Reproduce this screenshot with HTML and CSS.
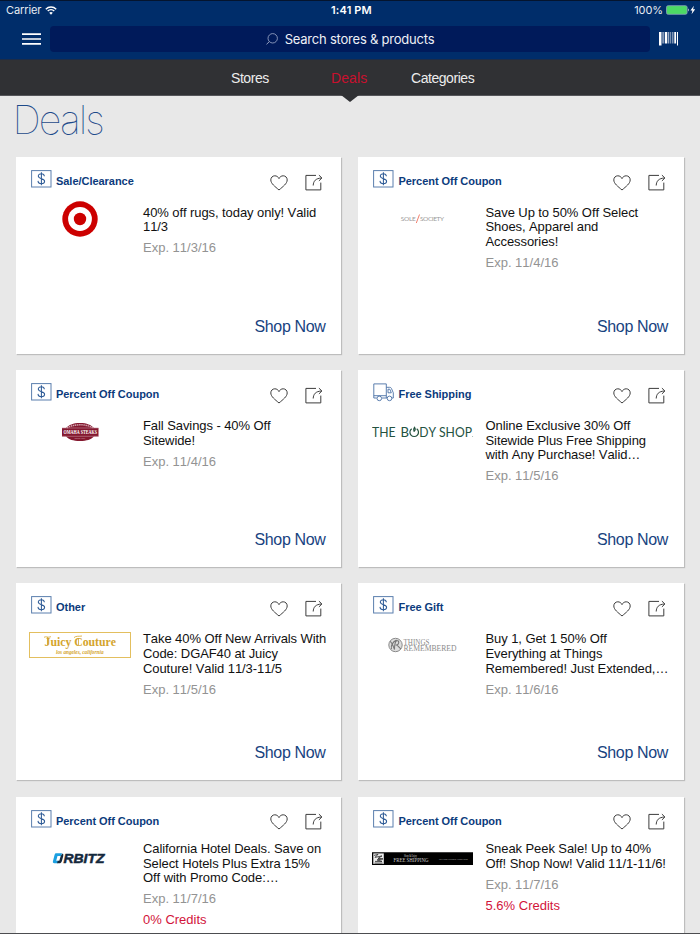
FILE: index.html
```html
<!DOCTYPE html>
<html lang="en">
<head>
<meta charset="utf-8">
<title>Deals</title>
<link rel="stylesheet" href="styles.css">
</head>
<body>
<svg class="defs" aria-hidden="true">
  <symbol id="money" viewBox="0 0 21 18">
    <rect x=".6" y=".6" width="19.4" height="16.4" fill="none" stroke="#5b7fae" stroke-width="1"/>
    <path d="M13.400 6.200C13.200 4.500 12.100 3.700 10.400 3.700 8.600 3.700 7.300 4.600 7.300 6.100c0 3.400 6.300 1.700 6.300 5.100 0 1.600-1.400 2.500-3.200 2.500-2 0-3.300-1-3.400-2.800M10.400 2.200v13" fill="none" stroke="#2f5c97" stroke-width="1.050"/>
  </symbol>
  <symbol id="truck" viewBox="0 0 21 19">
    <g fill="none" stroke="#4a71a6" stroke-width=".9">
      <path d="M3.700 15H.8V.9h12.500V15H9M13.300 4.300h3.200c1.200 0 1.700.5 2.100 1.500l1.700 4V15h-1.500M13.300 15h.8M15 6.200h1.800l1.500 3.600H15zM.8 12.700h12.500"/>
      <circle cx="6.300" cy="15.400" r="2.300"/><circle cx="16.500" cy="15.400" r="2.300"/>
    </g>
  </symbol>
  <symbol id="heart" viewBox="0 0 18 16">
    <path d="M9 15C5 11.500.8 8.600.8 4.900.8 2.600 2.500.8 4.800.8 6.700.8 8.200 1.900 9 3.600 9.800 1.900 11.300.8 13.200.8c2.300 0 4 1.800 4 4.100C17.200 8.600 13 11.500 9 15z" fill="none" stroke="#3c3c3c" stroke-width="1"/>
  </symbol>
  <symbol id="share" viewBox="0 0 18 17">
    <path d="M11 1.400H.9v14.500h14.900V8.600M8.200 11.500c.2-4.400 2.400-7.200 8.400-7.500M13.900 1.100l3 2.900-3 2.900" fill="none" stroke="#3c3c3c" stroke-width="1"/>
  </symbol>
</svg>

<header class="top">
  <div class="status">
    <div class="carrier">Carrier
      <svg width="12" height="9" viewBox="0 0 12 9"><g fill="none" stroke="#fff" stroke-width="1.400"><path d="M.8 3.200a7.400 7.400 0 0 1 10.400 0M2.700 5.100a4.700 4.700 0 0 1 6.600 0"/></g><path d="M6 8.700 4.200 6.800a2.600 2.600 0 0 1 3.600 0z" fill="#fff"/></svg>
    </div>
    <div class="clock">1:41 PM</div>
    <div class="power">100%
      <svg width="29" height="10" viewBox="0 0 29 10"><rect x=".5" y=".7" width="20.600" height="8.600" rx="1.600" fill="#4cd964" stroke="#8ba3bd" stroke-width=".8"/><path d="M22 3.600c1 .3 1 2.500 0 2.800z" fill="#dfe6ef"/><path d="M27.900.8 24.400 5.500h2l-.8 3.700 3.500-4.900h-2z" fill="#fff"/></svg>
    </div>
  </div>
  <div class="searchbar">
    <svg class="menu" width="20" height="12" viewBox="0 0 20 12"><path d="M0 1.200h19M0 6h19M0 10.800h19" stroke="#fff" stroke-width="1.700"/></svg>
    <div class="search">
      <svg width="12" height="12" viewBox="0 0 12 12"><circle cx="6.700" cy="5.300" r="4.700" fill="none" stroke="#a3aecb" stroke-width=".8"/><path d="M3.300 8.700.5 11.300" stroke="#a3aecb" stroke-width=".9"/></svg>
      <span>Search stores &amp; products</span>
    </div>
    <svg class="barcode" width="20" height="14" viewBox="0 0 20 14"><g fill="#fff"><path d="M0 0h2.500v13.600H0zM3.600 0h.9v11.400h-.9zM5.800 0h2.500v11.400H5.800zM15.300 0h1.800v11.400h-1.800zM18 0h1v13.600h-1z"/><path d="M9 0h1.300v11.400H9zM11.200 0h1v11.400h-1zM13.200 0h1.200v11.400h-1.200z" opacity=".6"/></g></svg>
  </div>
</header>

<nav class="tabs">
  <a class="tab">Stores</a><a class="tab active">Deals</a><a class="tab">Categories</a>
</nav>

<main>
  <h1>Deals</h1>
  <section class="grid">
    <article class="card">
      <div class="head"><svg class="type"><use href="#money"/></svg><span class="label">Sale/Clearance</span><svg class="heart"><use href="#heart"/></svg><svg class="share"><use href="#share"/></svg></div>
      <div class="body">
        <svg class="logo" viewBox="0 0 102 40"><circle cx="51" cy="20" r="17.700" fill="#c00"/><circle cx="51" cy="20" r="11.900" fill="#fff"/><circle cx="51" cy="20" r="6.200" fill="#c00"/></svg>
        <div class="text"><p class="title">40% off rugs, today only! Valid<br>11/3</p><p class="exp">Exp. 11/3/16</p></div>
      </div>
      <a class="shop">Shop Now</a>
    </article>

    <article class="card">
      <div class="head"><svg class="type"><use href="#money"/></svg><span class="label">Percent Off Coupon</span><svg class="heart"><use href="#heart"/></svg><svg class="share"><use href="#share"/></svg></div>
      <div class="body">
        <svg class="logo" viewBox="0 0 102 40" font-family="Lato, sans-serif" font-size="6.500" fill="#9a9a9a"><text x="28.800" y="22" textLength="15">SOLE</text><path d="m44.300 24 3.200-8.500" stroke="#f0705c" stroke-width=".9"/><text x="48" y="22" textLength="24">SOCIETY</text></svg>
        <div class="text"><p class="title">Save Up to 50% Off Select<br>Shoes, Apparel and<br>Accessories!</p><p class="exp">Exp. 11/4/16</p></div>
      </div>
      <a class="shop">Shop Now</a>
    </article>

    <article class="card">
      <div class="head"><svg class="type"><use href="#money"/></svg><span class="label">Percent Off Coupon</span><svg class="heart"><use href="#heart"/></svg><svg class="share"><use href="#share"/></svg></div>
      <div class="body">
        <svg class="logo" viewBox="0 0 102 40" font-family="Liberation Serif, serif"><path d="M33 16h4c3-3 7-5 14-5s11 2 14 5h4.500v8.500H65C62 27.500 58 29 51 29s-11-1.500-14-4.500h-4z" fill="#84182f"/><path d="M38 15.800c7-4 19-4 26 0" fill="none" stroke="#d3a8b1" stroke-width="1.400" stroke-dasharray="1.500 .6"/><path d="M33 16h36.500M33 24.300h36.500" stroke="#c48e9b" stroke-width=".6"/><text x="34.500" y="22.300" font-size="6.300" font-weight="bold" fill="#fff" textLength="33.500" lengthAdjust="spacingAndGlyphs">OMAHA STEAKS</text><text x="45.500" y="27" font-size="2.800" fill="#dcb4bd" textLength="11">SINCE 1917</text></svg>
        <div class="text"><p class="title">Fall Savings - 40% Off<br>Sitewide!</p><p class="exp">Exp. 11/4/16</p></div>
      </div>
      <a class="shop">Shop Now</a>
    </article>

    <article class="card">
      <div class="head"><svg class="type truck"><use href="#truck"/></svg><span class="label">Free Shipping</span><svg class="heart"><use href="#heart"/></svg><svg class="share"><use href="#share"/></svg></div>
      <div class="body">
        <svg class="logo" viewBox="0 0 102 40" font-family="Lato, sans-serif" font-size="13.500" fill="#24523f"><text x="0" y="24.900" textLength="23.500" lengthAdjust="spacingAndGlyphs">THE</text><text x="28.600" y="24.900" textLength="8.500" lengthAdjust="spacingAndGlyphs">B</text><path d="M39.700 16.700a4.300 4.300 0 1 0 5 0M42 19.500c-.8-1.600-.6-2.900.5-4.200 1 1.300 1 2.700-.5 4.200" fill="none" stroke="#24523f" stroke-width="1.200"/><text x="47.200" y="24.900" textLength="16.800" lengthAdjust="spacingAndGlyphs">DY</text><text x="67" y="24.900" textLength="33" lengthAdjust="spacingAndGlyphs">SHOP</text><circle cx="100.700" cy="24.400" r=".4"/></svg>
        <div class="text"><p class="title">Online Exclusive 30% Off<br>Sitewide Plus Free Shipping<br>with Any Purchase! Valid…</p><p class="exp">Exp. 11/5/16</p></div>
      </div>
      <a class="shop">Shop Now</a>
    </article>

    <article class="card">
      <div class="head"><svg class="type"><use href="#money"/></svg><span class="label">Other</span><svg class="heart"><use href="#heart"/></svg><svg class="share"><use href="#share"/></svg></div>
      <div class="body">
        <svg class="logo" viewBox="0 0 102 40" font-family="Liberation Serif, serif" fill="#d4a42c"><rect x=".5" y="7.500" width="101" height="25" fill="#fff" stroke="#e3bf5e"/><text x="15.500" y="21" font-size="13.500" font-weight="bold" textLength="71.500" lengthAdjust="spacingAndGlyphs">Juicy Couture</text><path d="M15 12.300c2-1.400 4 .8 7-.6M45 12.600c2-2 5-1 8-1.600M49.500 13v7M18.500 12v8" fill="none" stroke="#d4a42c" stroke-width=".8"/><text x="27" y="28.500" font-size="6.500" font-style="italic" font-weight="bold" textLength="47.500" lengthAdjust="spacingAndGlyphs">los angeles, california</text></svg>
        <div class="text"><p class="title">Take 40% Off New Arrivals With<br>Code: DGAF40 at Juicy<br>Couture! Valid 11/3-11/5</p><p class="exp">Exp. 11/5/16</p></div>
      </div>
      <a class="shop">Shop Now</a>
    </article>

    <article class="card">
      <div class="head"><svg class="type"><use href="#money"/></svg><span class="label">Free Gift</span><svg class="heart"><use href="#heart"/></svg><svg class="share"><use href="#share"/></svg></div>
      <div class="body">
        <svg class="logo" viewBox="0 0 102 40" font-family="Liberation Serif, serif" fill="#8a8a8a"><circle cx="23.500" cy="20" r="6.700" fill="#ddd" stroke="#8a8a8a" stroke-width="1"/><path d="M18 16.500c2 .5 2.500 3 4.500 8 0-5 0-7 2-9 3 0 3 3.500 0 4.500 2 1 3 3 4.500 4M19.500 24c-1-3 1-7 5-9" fill="none" stroke="#777" stroke-width="1.100"/><text x="31.500" y="19.600" font-size="7.500" textLength="26" lengthAdjust="spacingAndGlyphs">THINGS</text><text x="31.500" y="26.200" font-size="7.500" textLength="53" lengthAdjust="spacingAndGlyphs">REMEMBERED</text></svg>
        <div class="text"><p class="title">Buy 1, Get 1 50% Off<br>Everything at Things<br>Remembered! Just Extended,…</p><p class="exp">Exp. 11/6/16</p></div>
      </div>
      <a class="shop">Shop Now</a>
    </article>

    <article class="card credit">
      <div class="head"><svg class="type"><use href="#money"/></svg><span class="label">Percent Off Coupon</span><svg class="heart"><use href="#heart"/></svg><svg class="share"><use href="#share"/></svg></div>
      <div class="body">
        <svg class="logo" viewBox="0 0 102 40"><path d="M26.500 14.200h6.500l-.8 2.700h-3.700l-1.300 4.800h2.200l-.8 2.500h-3.200c-1.500 0-1.800-.8-1.400-2.200l1.400-5.600c.2-1 .5-1.600 1.100-2.200z" fill="#1b9fe0"/><path d="M33.500 14.500c1 .4 1 1.300.7 2.700l-1.300 4.700c-.5 1.700-1.200 2.300-2.900 2.300h-2l.8-2.500h1.500l1.400-4.800z" fill="#14283c"/><text x="34.500" y="24.200" font-family="Liberation Sans, sans-serif" font-size="13.500" font-weight="bold" font-style="italic" fill="#14283c" stroke="#14283c" stroke-width=".5" textLength="41" lengthAdjust="spacingAndGlyphs">RBITZ</text></svg>
        <div class="text"><p class="title">California Hotel Deals. Save on<br>Select Hotels Plus Extra 15%<br>Off with Promo Code:…</p><p class="exp">Exp. 11/7/16</p><p class="credits">0% Credits</p></div>
      </div>
    </article>

    <article class="card credit">
      <div class="head"><svg class="type"><use href="#money"/></svg><span class="label">Percent Off Coupon</span><svg class="heart"><use href="#heart"/></svg><svg class="share"><use href="#share"/></svg></div>
      <div class="body">
        <svg class="logo" viewBox="0 0 102 40" font-family="Liberation Serif, serif"><path d="M0 13.200h101v12.800H0z"/><path d="M1.300 14.400h10.500v10.500H1.300z" fill="#eee"/><path d="m2 16.400 4-1-3 3 7-1.500-4 2.500 5 .5-6 1 5 1.500H3M2.500 24.100h8" fill="none" stroke="#222" stroke-width=".8"/><text x="32" y="18" font-size="3" fill="#ccc" textLength="13" lengthAdjust="spacingAndGlyphs">Shop &amp; Enjoy</text><text x="21.500" y="23.400" font-size="5.500" fill="#ccc" textLength="35" lengthAdjust="spacingAndGlyphs">FREE SHIPPING</text><text x="67" y="20.700" font-size="2.600" fill="#aaa" font-weight="bold" textLength="29" lengthAdjust="spacingAndGlyphs">NO CODE NEEDED | SHOP NOW</text></svg>
        <div class="text"><p class="title">Sneak Peek Sale! Up to 40%<br>Off! Shop Now! Valid 11/1-11/6!</p><p class="exp">Exp. 11/7/16</p><p class="credits">5.6% Credits</p></div>
      </div>
    </article>
  </section>
</main>
</body>
</html>
```
FILE: styles.css
```css
* { box-sizing: border-box; }
html { overflow: hidden; }
body {
  margin: 0;
  height: 934px;
  overflow: hidden;
  display: flex;
  flex-direction: column;
  background: #e8e8e8;
  border-bottom: 1px solid #4c4d50;
  font-family: "Liberation Sans", Arial, sans-serif;
  font-kerning: none;
}
p, h1 { margin: 0; }
svg { display: block; flex: none; }
.defs { width: 0; height: 0; position: absolute; }

.top {
  flex: none;
  height: 59px;
  background: #002d6a;
  border-top: 1px solid #04142e;
  color: #fff;
}
.status {
  display: grid;
  grid-template-columns: 1fr auto 1fr;
  align-items: center;
  height: 18px;
  padding: 0 5px 0 6px;
  font: 11px/18px Inter, sans-serif;
}
.carrier, .power { display: flex; align-items: center; gap: 4px; color: #e6ebf2; letter-spacing: -.1px; }
.power { justify-content: flex-end; gap: 3px; letter-spacing: -.1px; }
.clock { font-weight: 600; letter-spacing: .15px; padding-left: 2px; }
.searchbar { display: flex; align-items: center; height: 40px; padding-left: 22px; }
.menu { margin-right: 8px; }
.search {
  width: 600px;
  height: 26px;
  border-radius: 4px;
  background: #001a5a;
  display: flex;
  align-items: center;
  justify-content: center;
  gap: 7px;
  font: 13px/26px Inter, sans-serif;
  letter-spacing: -.22px;
  color: #eef0f6;
}
.barcode { margin-left: 9px; }

.tabs {
  flex: none;
  height: 37px;
  display: flex;
  padding-left: 231px;
  background: #303134;
  border-bottom: 1px solid #55565a;
  border-top: 1px solid #1c2c48;
  color: #ececec;
  font-size: 14px;
  line-height: 37px;
}
.tab { letter-spacing: -.45px; width: 100px; }
.tab:last-child { width: auto; margin-left: -20px; }
.tab.active { position: relative; color: #c8102e; letter-spacing: .1px; }
.tab.active::after {
  content: "";
  position: absolute;
  left: 9.5px;
  top: 35px;
  border: solid transparent;
  border-width: 7px 9px 0;
  border-top-color: #303134;
}

main { height: 837px; overflow: hidden; padding-left: 15.5px; }
h1 {
  height: 61px;
  margin-left: -3px;
  font: 100 39.5px/49px Inter, sans-serif;
  letter-spacing: -1.9px;
  color: #1d4a8a;
}
.grid {
  display: grid;
  grid-template-columns: 325.5px 325.5px;
  grid-auto-rows: 197px;
  gap: 16.2px 17px;
}
.card {
  display: flex;
  flex-direction: column;
  background: #fff;
  box-shadow: 1px 1px 1px #bdbdbd;
}
.head { display: flex; height: 47px; padding: 13px 18px 0 15px; }
.type { width: 21px; height: 18px; }
.type.truck { height: 19px; }
.label {
  flex: 1;
  margin-left: 4.5px;
  font-size: 11px;
  line-height: 22px;
  font-weight: bold;
  letter-spacing: -.04px;
  color: #0c3b7c;
}
.heart { width: 18px; height: 16px; margin: 4.500px 17px 0 0; }
.share { width: 18px; height: 17px; margin-top: 3.500px; }
.body { display: flex; flex: 1; }
.logo { width: 102px; height: 40px; margin: -5px 12px 0 13.5px; }
.text {
  padding-top: 1.7px;
  white-space: nowrap;
  font-size: 13px;
  line-height: 14.8px;
  letter-spacing: -.08px;
  color: #111;
}
.credit .text { margin-top: -3.5px; }
.exp { color: #939393; margin-top: 6.2px; letter-spacing: 0; }
.credits { color: #d2143a; margin-top: 6.2px; letter-spacing: 0; }
.shop {
  align-self: flex-end;
  margin-right: 15.5px;
  height: 37.5px;
  font-size: 16px;
  line-height: 20px;
  letter-spacing: -.35px;
  color: #18437f;
}
```
